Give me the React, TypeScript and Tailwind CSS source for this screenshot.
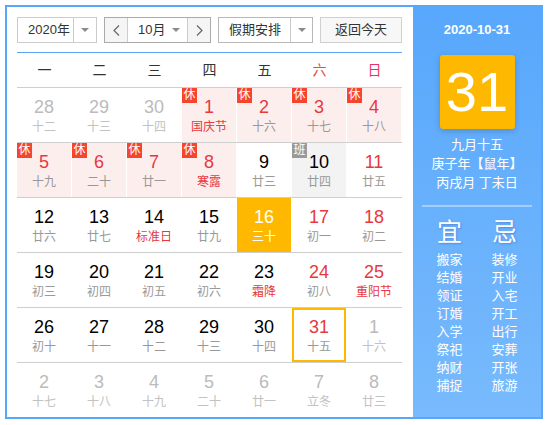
import React from 'react';

type Day = {
  d: number;
  l: string;
  other?: boolean;
  rest?: boolean;
  work?: boolean;
  redD?: boolean;
  redL?: boolean;
  sel?: boolean;
  today?: boolean;
};

const weeks: Day[][] = [
  [
    { d: 28, l: '十二', other: true },
    { d: 29, l: '十三', other: true },
    { d: 30, l: '十四', other: true },
    { d: 1, l: '国庆节', rest: true, redD: true, redL: true },
    { d: 2, l: '十六', rest: true, redD: true },
    { d: 3, l: '十七', rest: true, redD: true },
    { d: 4, l: '十八', rest: true, redD: true },
  ],
  [
    { d: 5, l: '十九', rest: true, redD: true },
    { d: 6, l: '二十', rest: true, redD: true },
    { d: 7, l: '廿一', rest: true, redD: true },
    { d: 8, l: '寒露', rest: true, redD: true, redL: true },
    { d: 9, l: '廿三' },
    { d: 10, l: '廿四', work: true },
    { d: 11, l: '廿五', redD: true },
  ],
  [
    { d: 12, l: '廿六' },
    { d: 13, l: '廿七' },
    { d: 14, l: '标准日', redL: true },
    { d: 15, l: '廿九' },
    { d: 16, l: '三十', sel: true },
    { d: 17, l: '初一', redD: true },
    { d: 18, l: '初二', redD: true },
  ],
  [
    { d: 19, l: '初三' },
    { d: 20, l: '初四' },
    { d: 21, l: '初五' },
    { d: 22, l: '初六' },
    { d: 23, l: '霜降', redL: true },
    { d: 24, l: '初八', redD: true },
    { d: 25, l: '重阳节', redD: true, redL: true },
  ],
  [
    { d: 26, l: '初十' },
    { d: 27, l: '十一' },
    { d: 28, l: '十二' },
    { d: 29, l: '十三' },
    { d: 30, l: '十四' },
    { d: 31, l: '十五', redD: true, today: true },
    { d: 1, l: '十六', other: true },
  ],
  [
    { d: 2, l: '十七', other: true },
    { d: 3, l: '十八', other: true },
    { d: 4, l: '十九', other: true },
    { d: 5, l: '二十', other: true },
    { d: 6, l: '廿一', other: true },
    { d: 7, l: '立冬', other: true },
    { d: 8, l: '廿三', other: true },
  ],
];

const yi = ['搬家', '结婚', '领证', '订婚', '入学', '祭祀', '纳财', '捕捉'];
const ji = ['装修', '开业', '入宅', '开工', '出行', '安葬', '开张', '旅游'];

const Caret = () => (
  <svg width="8" height="4" viewBox="0 0 8 4">
    <polygon points="0,0 8,0 4,4" fill="#8a8a8a" />
  </svg>
);

const Chevron = ({ left }: { left?: boolean }) => (
  <svg width="7" height="11" viewBox="0 0 7 11">
    <polyline
      points={left ? '6,0.5 1,5.5 6,10.5' : '1,0.5 6,5.5 1,10.5'}
      fill="none"
      stroke="#666"
      strokeWidth="1.2"
    />
  </svg>
);

const DayCell = ({ c }: { c: Day }) => {
  let bg = 'bg-white';
  if (c.rest) bg = 'bg-[#fdeeee]';
  if (c.work) bg = 'bg-[#f3f3f3]';
  if (c.sel) bg = 'bg-[#ffb800]';

  let numColor = 'text-black';
  if (c.redD) numColor = 'text-[#e8383d]';
  if (c.other) numColor = 'text-[#bbbbbb]';
  if (c.sel) numColor = 'text-white';

  let lunColor = 'text-[#999999]';
  if (c.redL) lunColor = 'text-[#e8383d]';
  if (c.other) lunColor = 'text-[#c2c2c2]';
  if (c.sel) lunColor = 'text-white';

  return (
    <div className={`relative h-[54px] w-[55px] border-r border-white ${bg} flex flex-col items-center pt-[8px]`}>
      {c.rest && (
        <span className="absolute left-0 top-0 w-[15px] h-[15px] bg-[#f5452f] text-white text-[12px] leading-[15px] text-center">
          休
        </span>
      )}
      {c.work && (
        <span className="absolute left-0 top-0 w-[15px] h-[15px] bg-[#9a9a9a] text-white text-[12px] leading-[15px] text-center">
          班
        </span>
      )}
      {c.today && <div className="absolute left-0 top-0 bottom-0 right-0 border-2 border-[#ffb800]" />}
      <span className={`text-[18px] leading-[22px] ${numColor}`}>{c.d}</span>
      <span className={`text-[12px] leading-[18px] ${lunColor}`}>{c.l}</span>
    </div>
  );
};

export default function App() {
  return (
    <div className="p-[5px] bg-white font-['Liberation_Sans','Noto_Sans_CJK_SC',sans-serif]">
      <div className="w-[538px] h-[414px] border-2 border-[#5aa6fb] flex">
        {/* left: calendar */}
        <div className="w-[406px] bg-white pl-[10px] pt-[10px]">
          <div className="flex gap-[7px] h-[26px] text-[13px] text-[#333]">
            <div className="w-[80px] flex border border-[#cccccc]">
              <div className="w-[55px] pl-[10px] leading-[24px]">2020年</div>
              <div className="flex-1 border-l border-[#cccccc] flex items-center justify-center">
                <Caret />
              </div>
            </div>
            <div className="w-[107px] flex border border-[#aaaaaa]">
              <div className="w-[22px] bg-[#f5f5f5] flex items-center justify-center">
                <Chevron left />
              </div>
              <div className="flex-1 border-l border-r border-[#cccccc] flex items-center pl-[10px] pr-[7px] justify-between">
                <span>10月</span>
                <Caret />
              </div>
              <div className="w-[22px] bg-[#f5f5f5] flex items-center justify-center">
                <Chevron />
              </div>
            </div>
            <div className="w-[95px] flex border border-[#b8b8b8]">
              <div className="w-[71px] pl-[10px] leading-[24px]">假期安排</div>
              <div className="flex-1 border-l border-[#cccccc] flex items-center justify-center">
                <Caret />
              </div>
            </div>
            <div className="w-[82px] border border-[#d0d0d0] bg-[#f7f7f7] text-center leading-[24px]">返回今天</div>
          </div>

          <div className="mt-[9px] w-[385px] h-px bg-[#5aa6fb]" />

          <div className="w-[385px] h-[34px] grid grid-cols-7 text-[14px] text-[#333]">
            {['一', '二', '三', '四', '五', '六', '日'].map((w, i) => (
              <div
                key={w}
                className={`flex items-center justify-center ${i === 5 ? 'text-[#e0503c]' : i === 6 ? 'text-[#e8336a]' : ''}`}
              >
                {w}
              </div>
            ))}
          </div>

          {weeks.map((row, ri) => (
            <div key={ri} className="w-[385px] h-[55px] border-t border-[#cfcfcf] flex">
              {row.map((c, ci) => (
                <DayCell key={ci} c={c} />
              ))}
            </div>
          ))}
        </div>

        {/* right: detail panel */}
        <div className="w-[128px] bg-gradient-to-b from-[#57a7fc] to-[#78bafc] flex flex-col items-center text-white">
          <div className="pt-[15px] text-[13px] leading-[16px] font-bold">2020-10-31</div>
          <div className="mt-[17px] w-[75px] h-[74px] rounded-[3px] bg-[#ffb800] shadow-[0_2px_6px_rgba(0,0,0,0.18)] flex items-center justify-center text-[56px] leading-none">
            31
          </div>
          <div className="mt-[6px] text-[13px] leading-[19px] text-center">
            <div>九月十五</div>
            <div>庚子年【鼠年】</div>
            <div>丙戌月 丁未日</div>
          </div>
          <div className="mt-[13px] w-[110px] h-[2px] bg-[#a4cffc]" />
          <div className="mt-[11px] flex">
            <div className="w-[55px] flex flex-col items-center">
              <div className="text-[25px] leading-[28px] [text-shadow:1px_1px_2px_rgba(60,60,160,0.35)]">宜</div>
              <div className="mt-[5px] text-[13px] leading-[18px] text-center">
                {yi.map((t) => (
                  <div key={t}>{t}</div>
                ))}
              </div>
            </div>
            <div className="w-[55px] flex flex-col items-center">
              <div className="text-[25px] leading-[28px] [text-shadow:1px_1px_2px_rgba(60,60,160,0.35)]">忌</div>
              <div className="mt-[5px] text-[13px] leading-[18px] text-center">
                {ji.map((t) => (
                  <div key={t}>{t}</div>
                ))}
              </div>
            </div>
          </div>
        </div>
      </div>
    </div>
  );
}
